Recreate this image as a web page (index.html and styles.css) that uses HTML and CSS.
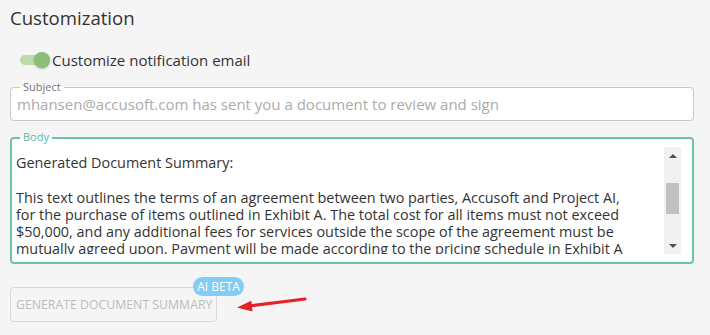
FILE: index.html
```html
<!DOCTYPE html>
<html>
<head>
<meta charset="utf-8">
<link rel="stylesheet" href="styles.css">
</head>
<body>
<div class="page">
  <h2 class="title">Customization</h2>
  <div class="toggle-row">
    <span class="track"><span class="thumb"></span></span>
    <span class="toggle-label">Customize notification email</span>
  </div>
  <div class="field subject">
    <span class="field-label">Subject</span>
    <div class="placeholder">mhansen@accusoft.com has sent you a document to review and sign</div>
  </div>
  <div class="field body-field">
    <span class="field-label teal">Body</span>
    <div class="body-inner">
      <div class="body-text">Generated Document Summary:<br><br>This text outlines the terms of an agreement between two parties, Accusoft and Project AI,<br>for the purchase of items outlined in Exhibit A. The total cost for all items must not exceed<br>$50,000, and any additional fees for services outside the scope of the agreement must be<br>mutually agreed upon. Payment will be made according to the pricing schedule in Exhibit A<br>and is due within thirty days of receipt of invoice.</div>
      <div class="scrollbar">
        <div class="arrow up"></div>
        <div class="sb-track"><div class="sb-thumb"></div></div>
        <div class="arrow down"></div>
      </div>
    </div>
  </div>
  <div class="action-row">
    <button class="gen-btn">GENERATE DOCUMENT SUMMARY<span class="badge">AI BETA</span></button>
    <svg class="red-arrow" width="72" height="20" viewBox="0 0 72 20">
      <line x1="70" y1="4" x2="14" y2="11" stroke="#e4222a" stroke-width="3" stroke-linecap="round"/>
      <polygon points="2,12.5 16.3,5.7 17.5,16.6" fill="#e4222a"/>
    </svg>
  </div>
</div>
</body>
</html>
```

FILE: styles.css
```css
html, body {
  margin: 0;
  padding: 0;
  background: #f5f5f5;
}
body {
  font-family: "Open Sans", "Liberation Sans", sans-serif;
  color: #333;
}
.page {
  width: 710px;
  height: 335px;
  box-sizing: border-box;
  padding: 5px 16px 0 10px;
  overflow: hidden;
}
.title {
  margin: 0;
  font-size: 18.6px;
  font-weight: 400;
  line-height: 25px;
  color: #333;
}
.toggle-row {
  display: flex;
  align-items: center;
  margin-top: 20px;
  padding-left: 10px;
  height: 20px;
}
.track {
  display: flex;
  align-items: center;
  justify-content: flex-end;
  width: 26px;
  height: 10px;
  border-radius: 5px;
  background: #b9dcab;
  margin-right: 6px;
}
.thumb {
  flex: none;
  width: 16px;
  height: 16px;
  border-radius: 50%;
  background: #8bbf77;
  margin-right: -4px;
  box-shadow: 0 1px 2px rgba(0,0,0,0.25);
}
.toggle-label {
  font-size: 15px;
  line-height: 20px;
  color: #333;
}
.field {
  position: relative;
  background: #fff;
  border-radius: 4px;
  box-sizing: border-box;
}
.subject {
  margin-top: 17px;
  height: 34px;
  border: 1px solid #c9c9c9;
  display: flex;
  align-items: center;
  padding-left: 6px;
}
.field-label {
  position: absolute;
  left: 9px;
  top: -8px;
  padding: 0 3px;
  font-size: 11px;
  line-height: 14px;
  color: #777;
  background: linear-gradient(#f5f5f5 50%, #fff 50%);
}
.teal {
  color: #5eb8a9;
  left: 8px;
  top: -9px;
}
.placeholder {
  font-size: 15px;
  line-height: 20px;
  color: #ababab;
  white-space: nowrap;
}
.body-field {
  margin-top: 16px;
  height: 127px;
  border: 2px solid #6dbfb1;
  padding: 8px 11px 6px 4px;
}
.body-inner {
  display: flex;
  height: 109px;
}
.body-text {
  flex: 1;
  height: 107px;
  box-sizing: border-box;
  padding-top: 7px;
  overflow: hidden;
  font-size: 14.4px;
  line-height: 17.3px;
  color: #333;
  white-space: nowrap;
}
.scrollbar {
  flex: none;
  width: 17px;
  height: 107px;
  background: #f1f1f1;
  display: flex;
  flex-direction: column;
}
.arrow {
  height: 17px;
  display: flex;
  align-items: center;
  justify-content: center;
}
.arrow.up::before {
  content: "";
  border-left: 4px solid transparent;
  border-right: 4px solid transparent;
  border-bottom: 4px solid #505050;
}
.arrow.down::before {
  content: "";
  border-left: 4px solid transparent;
  border-right: 4px solid transparent;
  border-top: 4px solid #505050;
}
.sb-track {
  flex: 1;
  padding: 19px 2px 0 2px;
}
.sb-thumb {
  height: 31px;
  background: #c1c1c1;
}
.action-row {
  display: flex;
  align-items: flex-start;
  margin-top: 23px;
}
.gen-btn {
  position: relative;
  width: 207px;
  height: 35px;
  padding: 0 0 0 5px;
  text-align: left;
  border: 1px solid #d9d9d9;
  border-radius: 4px;
  background: transparent;
  font-family: "Open Sans", "Liberation Sans", sans-serif;
  font-size: 12.3px;
  color: #bdbdbd;
  white-space: nowrap;
}
.badge {
  position: absolute;
  left: 182px;
  top: -11px;
  width: 51px;
  height: 19px;
  border-radius: 10px;
  background: #82ccf7;
  color: #fff;
  font-size: 12px;
  line-height: 19px;
  text-align: center;
}
.red-arrow {
  margin-left: 18px;
  margin-top: 8px;
}
```
